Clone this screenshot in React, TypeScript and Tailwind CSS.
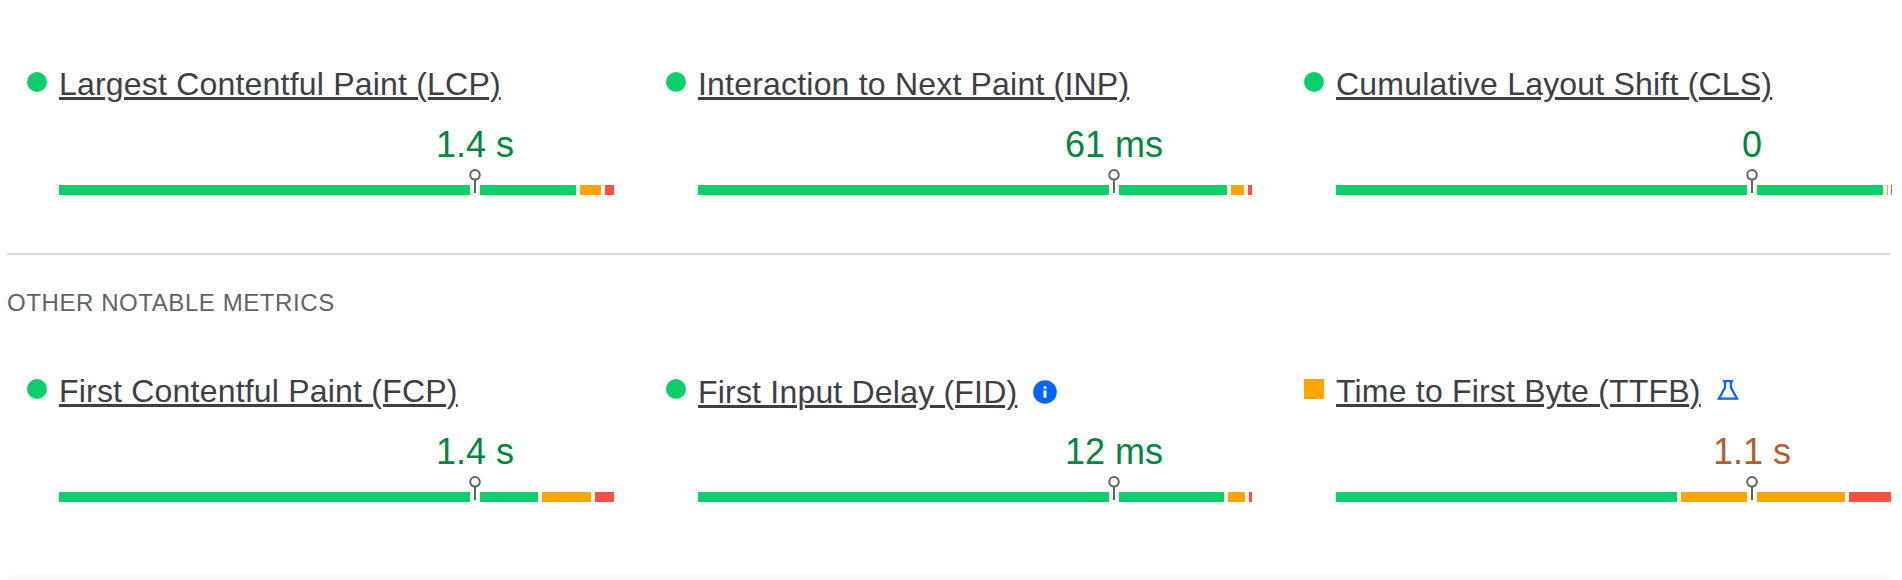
import React from "react";

type Segment = { width: number; color: string; gap: number };
type Metric = {
  name: string;
  value: string;
  shape: string;
  valueColor: string;
  segments: Segment[];
  icon?: "info" | "flask";
};

const GREEN = "bg-[#0cce6b]";
const ORANGE = "bg-[#ffa400]";
const RED = "bg-[#ff4e42]";
const GOOD = "text-[#018642]";
const FAIR = "text-[#b0602c]";
const DOT = "rounded-full bg-[#0cce6b]";

const seg = (width: number, color: string, gap = 4): Segment => ({ width, color, gap });

const core: Metric[] = [
  { name: "Largest Contentful Paint (LCP)", value: "1.4 s", shape: DOT, valueColor: GOOD,
    segments: [seg(411, GREEN, 10), seg(96, GREEN), seg(21, ORANGE), seg(9, RED, 0)] },
  { name: "Interaction to Next Paint (INP)", value: "61 ms", shape: DOT, valueColor: GOOD,
    segments: [seg(411, GREEN, 10), seg(108, GREEN), seg(13, ORANGE), seg(4, RED, 0)] },
  { name: "Cumulative Layout Shift (CLS)", value: "0", shape: DOT, valueColor: GOOD,
    segments: [seg(411, GREEN, 10), seg(126, GREEN), seg(1, ORANGE, 3), seg(1, RED, 0)] },
];

const other: Metric[] = [
  { name: "First Contentful Paint (FCP)", value: "1.4 s", shape: DOT, valueColor: GOOD,
    segments: [seg(411, GREEN, 10), seg(58, GREEN), seg(49, ORANGE), seg(19, RED, 0)] },
  { name: "First Input Delay (FID)", value: "12 ms", shape: DOT, valueColor: GOOD, icon: "info",
    segments: [seg(411, GREEN, 10), seg(105, GREEN), seg(17, ORANGE), seg(3, RED, 0)] },
  { name: "Time to First Byte (TTFB)", value: "1.1 s", shape: "bg-[#ffa400]", valueColor: FAIR, icon: "flask",
    segments: [seg(341, GREEN), seg(66, ORANGE, 10), seg(88, ORANGE), seg(42, RED, 0)] },
];

function InfoIcon() {
  return (
    <svg className="ml-4 mt-[13px] size-6 shrink-0" viewBox="0 0 24 24">
      <circle cx="12" cy="12" r="11.8" fill="#06f" />
      <path d="M10.5 6.2h3v2.6h-3zM10.5 10.4h3v7.4h-3z" fill="#fff" />
    </svg>
  );
}

function FlaskIcon() {
  return (
    <svg className="ml-4 mt-[13px] h-5 w-[22px] shrink-0" viewBox="0 0 22 20" fill="none" stroke="#06f" strokeWidth="2.2">
      <path d="M5.7 1.1h10.6M8.1 1v6.5L1.9 18.7h18.2L13.9 7.5V1" />
    </svg>
  );
}

function MetricCard({ metric }: { metric: Metric }) {
  return (
    <article className="flex h-[150px] gap-3 pl-5">
      <span className={`mt-3 size-5 shrink-0 ${metric.shape}`} />
      <div className="flex flex-col">
        <div className="flex h-[52px] items-start">
          <a
            className={`whitespace-nowrap text-[32px] leading-[48px] tracking-[0.2px] text-[#3c4043] underline decoration-[3px] underline-offset-2 ${metric.icon === "info" ? "pt-px" : ""}`}
          >
            {metric.name}
          </a>
          {metric.icon === "info" && <InfoIcon />}
          {metric.icon === "flask" && <FlaskIcon />}
        </div>
        <div className="flex w-[832px] flex-col items-center">
          <span className={`h-[57px] whitespace-nowrap text-[36px] leading-[66px] ${metric.valueColor}`}>
            {metric.value}
          </span>
          <svg className="h-6 w-3" viewBox="0 0 12 24" fill="none" stroke="#5f6368" strokeWidth="2">
            <circle cx="6" cy="5.8" r="4.8" />
            <path d="M6 11v13" />
          </svg>
        </div>
        <div className="-mt-2 flex h-2.5">
          {metric.segments.map((s, i) => (
            <span key={i} className={`shrink-0 ${s.color}`} style={{ width: s.width, marginRight: s.gap }} />
          ))}
        </div>
      </div>
    </article>
  );
}

function MetricRow({ metrics }: { metrics: Metric[] }) {
  return (
    <div className="grid grid-cols-[639px_638px_607px]">
      {metrics.map((m) => (
        <MetricCard key={m.name} metric={m} />
      ))}
    </div>
  );
}

export default function App() {
  return (
    <main className="h-[580px] w-full overflow-hidden bg-white pl-[7px] pr-[11px] pt-[60px] font-['Liberation_Sans',Arial,sans-serif]">
      <MetricRow metrics={core} />
      <div className="mt-[43px] h-0.5 bg-[#dadce0]" />
      <h2 className="mt-[30px] h-9 text-[24px] leading-9 tracking-[0.58px] text-[#5f6368]">OTHER NOTABLE METRICS</h2>
      <div className="mt-[46px]">
        <MetricRow metrics={other} />
      </div>
      <div className="mt-[57px] h-10 rounded-t-lg bg-[#f8f9fa]" />
    </main>
  );
}
